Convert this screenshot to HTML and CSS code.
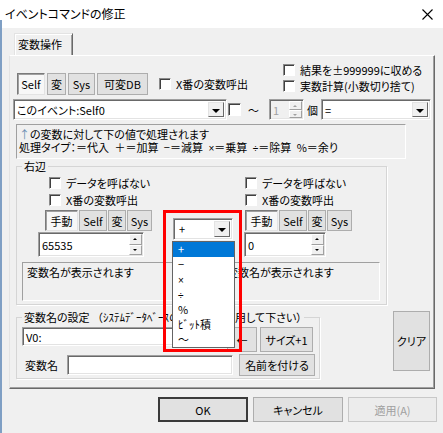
FILE: index.html
```html
<!DOCTYPE html>
<html lang="ja">

<head>
    <meta charset="UTF-8">
    <meta name="viewport" content="width=device-width, initial-scale=1.0">
    <title>イベントコマンドの修正</title>
    <link rel="stylesheet" href="styles.css">
</head>

<body>

    <div class="window">
        <div class="edge"></div>

        <div class="titlebar">
            <span class="title">イベントコマンドの修正</span>
            <svg class="close" width="11" height="11" viewBox="0 0 11 11">
                <path d="M0.5 0.5 L10.5 10.5 M10.5 0.5 L0.5 10.5" stroke="#000" stroke-width="1.1" fill="none"/>
            </svg>
        </div>

        <div class="client">
            <div class="tabs">
                <div class="tab">変数操作</div>
            </div>

            <div class="panel">
                <div class="row1">
                    <div class="target">
                        <div class="btn-group">
                            <button class="tb pressed w-self">Self</button>
                            <button class="tb w-hen">変</button>
                            <button class="tb w-sys">Sys</button>
                            <button class="tb w-db">可変DB</button>
                        </div>
                        <label class="check x-call"><span class="box"></span>X番の変数呼出</label>
                    </div>
                    <div class="options">
                        <label class="check"><span class="box"></span>結果を±999999に収める</label>
                        <label class="check"><span class="box"></span>実数計算(小数切り捨て)</label>
                    </div>
                </div>

                <div class="row2">
                    <div class="combo w-event"><span class="val">このイベント:Self0</span><span class="drop"></span></div>
                    <span class="box range-box"></span>
                    <span class="tilde">〜</span>
                    <div class="spin disabled w-count"><span class="val">1</span><span class="arrows"><i class="up"></i><i class="down"></i></span></div>
                    <span class="unit">個</span>
                    <div class="combo w-op"><span class="val">=</span><span class="drop"></span></div>
                </div>

                <div class="info">
                    <div><span class="arrow-up">↑</span>の変数に対して下の値で処理されます</div>
                    <div class="types">処理タイプ：＝代入 ＋＝加算 −＝減算 <span class="small">×</span>＝乗算 <span class="small">÷</span>＝除算 %＝余り</div>
                </div>

                <fieldset class="group right-side">
                    <legend>右辺</legend>
                    <div class="operands">
                        <div class="operand left">
                            <label class="check"><span class="box"></span>データを呼ばない</label>
                            <label class="check"><span class="box"></span>X番の変数呼出</label>
                            <div class="btn-group">
                                <button class="tb pressed w-manual">手動</button>
                                <button class="tb w-self2">Self</button>
                                <button class="tb w-hen2">変</button>
                                <button class="tb w-sys2">Sys</button>
                            </div>
                            <div class="spin w-value-l"><span class="val">65535</span><span class="arrows"><i class="up"></i><i class="down"></i></span></div>
                        </div>
                        <div class="op-col">
                            <div class="combo w-calc"><span class="val">+</span><span class="drop"></span></div>
                        </div>
                        <div class="operand right">
                            <label class="check"><span class="box"></span>データを呼ばない</label>
                            <label class="check"><span class="box"></span>X番の変数呼出</label>
                            <div class="btn-group">
                                <button class="tb pressed w-manual">手動</button>
                                <button class="tb w-self2">Self</button>
                                <button class="tb w-hen2">変</button>
                                <button class="tb w-sys2">Sys</button>
                            </div>
                            <div class="spin w-value-r"><span class="val">0</span><span class="arrows"><i class="up"></i><i class="down"></i></span></div>
                        </div>
                    </div>
                    <div class="names">
                        <div class="namebox name-l">変数名が表示されます</div>
                        <div class="namebox name-r">変数名が表示されます</div>
                    </div>
                </fieldset>

                <div class="bottom">
                    <fieldset class="group naming">
                        <legend>変数名の設定 <span class="note">（ｼｽﾃﾑﾃﾞｰﾀﾍﾞｰｽの変数名を使<span class="tail">用して下さい）</span></span></legend>
                        <div class="name-row">
                            <div class="edit w-v0">V0:</div>
                            <button class="btn w-copy">←</button>
                            <button class="btn w-size2">サイズ+1</button>
                        </div>
                        <div class="name-row2">
                            <span class="lbl">変数名</span>
                            <div class="edit w-name"></div>
                            <button class="btn w-naming">名前を付ける</button>
                        </div>
                    </fieldset>
                    <button class="btn clear">クリア</button>
                </div>
            </div>

            <div class="footer">
                <button class="btn default w-foot">OK</button>
                <button class="btn w-foot">キャンセル</button>
                <button class="btn disabled w-foot2">適用(A)</button>
            </div>
        </div>

        <!-- 開いているプルダウン -->
        <ul class="droplist">
            <li class="sel">+</li>
            <li>−</li>
            <li><span class="small">×</span></li>
            <li><span class="small">÷</span></li>
            <li>%</li>
            <li>ﾋﾞｯﾄ積</li>
            <li>〜</li>
        </ul>

        <div class="mark"></div>
    </div>

</body>

</html>
```

FILE: styles.css
```css
* {
    box-sizing: border-box;
}

body {
    margin: 0;
    padding: 0;
    font-family: "Noto Sans CJK JP", "Liberation Sans", sans-serif;
    font-size: 11px;
    font-feature-settings: "palt";
    color: #000;
    background: #fff;
}

button {
    font-family: inherit;
    font-size: 11px;
    font-feature-settings: "palt";
    color: #000;
    padding: 0;
    margin: 0;
}

.window {
    position: relative;
    width: 443px;
    height: 433px;
    overflow: hidden;
    background: #f0f0f0;
}

.edge {
    position: absolute;
    left: 0;
    top: 20px;
    width: 2px;
    bottom: 0;
    background: #7f9fc4;
}

.titlebar {
    height: 28px;
    background: #fff;
    display: flex;
    align-items: center;
    padding-left: 5px;
    padding-right: 10px;
}

.title {
    font-size: 12px;
    line-height: 14px;
}

.close {
    margin-left: auto;
}

.client {
    padding: 5px 0 0 9px;
}

.tabs {
    display: flex;
    padding-left: 5px;
}

.tab {
    width: 59px;
    height: 22px;
    line-height: 20px;
    padding-left: 3px;
    border-top: 1px solid #e3e3e3;
    border-left: 1px solid #e3e3e3;
    border-right: 1px solid #696969;
    box-shadow: inset 1px 1px #fff, inset -1px 0 #a0a0a0;
}

.panel {
    width: 426px;
    height: 334px;
    border: 1px solid;
    border-color: #fff #696969 #696969 #e3e3e3;
    box-shadow: inset -1px -1px #a0a0a0;
}

/* 上段 */
.row1 {
    display: flex;
    align-items: flex-end;
    margin: 6px 0 0 7px;
}

.target {
    display: flex;
    align-items: center;
    width: 266px;
}

.btn-group {
    display: flex;
    gap: 2px;
}

.tb {
    height: 22px;
    background: #e1e1e1;
    border: 1px solid #adadad;
}

.tb.pressed {
    background: #f7f7f7;
    border-color: #7a7a7a #e3e3e3 #e3e3e3 #7a7a7a;
    box-shadow: inset 1px 1px #a0a0a0;
}

.w-self { width: 28px; }
.w-hen { width: 19px; }
.w-sys { width: 27px; }
.w-db { width: 51px; }

.check {
    display: flex;
    align-items: center;
    gap: 5px;
    height: 15px;
    white-space: nowrap;
}

.x-call {
    margin-left: 11px;
}

.box {
    display: inline-block;
    flex: none;
    width: 12px;
    height: 12px;
    background: #fff;
    border: 1px solid;
    border-color: #8a8a8a #fff #fff #8a8a8a;
    box-shadow: inset 1px 1px #404040;
}

.options {
    display: flex;
    flex-direction: column;
    gap: 1px;
    margin-bottom: 2px;
}

/* 変数選択の行 */
.row2 {
    display: flex;
    align-items: center;
    margin: 4px 0 0 3px;
    height: 21px;
}

.combo,
.spin,
.edit {
    display: flex;
    align-items: center;
    background: #fff;
    border: 1px solid;
    border-color: #a0a0a0 #fff #fff #a0a0a0;
    box-shadow: inset 1px 1px #696969, inset -1px -1px #e3e3e3;
    padding: 2px;
}

.combo {
    height: 21px;
}

.combo .val,
.spin .val {
    flex: 1;
    padding-left: 1px;
    white-space: nowrap;
    overflow: hidden;
}

.drop {
    position: relative;
    flex: none;
    width: 16px;
    height: 100%;
    background: #f0f0f0;
    border: 1px solid;
    border-color: #e3e3e3 #696969 #696969 #e3e3e3;
}

.drop::after {
    content: "";
    position: absolute;
    left: 3px;
    top: 6px;
    border-left: 4px solid transparent;
    border-right: 4px solid transparent;
    border-top: 4px solid #000;
}

.w-event { width: 214px; }

.range-box {
    width: 13px;
    height: 13px;
    margin-left: 1px;
}

.tilde {
    margin-left: 7px;
    width: 12px;
}

.spin {
    height: 21px;
    padding: 1px 1px 1px 2px;
}

.arrows {
    flex: none;
    display: flex;
    flex-direction: column;
    width: 13px;
    height: 100%;
}

.arrows i {
    position: relative;
    flex: 1;
    background: #f0f0f0;
    border: 1px solid;
    border-color: #fff #a0a0a0 #a0a0a0 #fff;
}

.arrows i::after {
    content: "";
    position: absolute;
    left: 3px;
    border-left: 2px solid transparent;
    border-right: 2px solid transparent;
}

.arrows .up::after {
    top: 3px;
    border-bottom: 2px solid #000;
}

.arrows .down::after {
    top: 3px;
    border-top: 2px solid #000;
}

.spin.disabled {
    background: #f0f0f0;
    color: #a0a0a0;
}

.spin.disabled .arrows i::after {
    border-top-color: #a0a0a0;
    border-bottom-color: #a0a0a0;
}

.w-count {
    width: 35px;
    margin-left: 9px;
}

.unit {
    margin-left: 3px;
}

.w-op {
    width: 110px;
    margin-left: 3px;
}

.info {
    width: 390px;
    margin: 4px 0 0 6px;
    padding: 3px 2px;
    line-height: 13px;
    border: 1px solid;
    border-color: #a0a0a0 #fff #fff #a0a0a0;
    white-space: nowrap;
}

.types {
    word-spacing: 3px;
}

.small {
    font-family: "Liberation Sans", sans-serif;
    font-size: 10px;
}

.arrow-up {
    color: #6b8fb3;
}

/* グループ枠 */
.group {
    margin: 0;
    padding: 0;
    border: 1px solid #d5d5d5;
    box-shadow: 1px 1px #fff;
}

.group legend {
    padding: 0 2px;
    margin-left: 5px;
    line-height: 13px;
}

.right-side {
    width: 371px;
    margin: 1px 0 0 6px;
    padding-bottom: 3px;
}

.operands {
    display: flex;
    margin: 3px 0 0 21px;
}

.operand {
    display: flex;
    flex-direction: column;
}

.operand .check {
    height: 14px;
    margin-bottom: 3px;
}

.operand.left {
    width: 122px;
}

.operand.left .check {
    margin-left: 11px;
}

.operand.left .btn-group {
    margin-left: 7px;
}

.operand.right {
    margin-left: 11px;
}

.operand.right .check,
.operand.right .btn-group {
    margin-left: 1px;
}

.operand .btn-group {
    gap: 1px;
}

.operand .tb {
    height: 21px;
}

.w-manual { width: 33px; }
.w-self2 { width: 28px; }
.w-hen2 { width: 18px; }
.w-sys2 { width: 25px; }

.operand .spin {
    margin-top: 1px;
    height: 25px;
}

.w-value-l { width: 106px; }
.w-value-r { width: 82px; }

.op-col {
    margin-left: 13px;
    padding-top: 42px;
}

.w-calc {
    width: 60px;
    height: 22px;
}

.w-calc .val {
    padding-left: 3px;
}

.names {
    display: flex;
    gap: 2px;
    margin: 5px 0 0 5px;
}

.namebox {
    height: 39px;
    padding: 2px 4px;
    line-height: 14px;
    border: 1px solid;
    border-color: #a0a0a0 #fff #fff #a0a0a0;
    white-space: nowrap;
    overflow: hidden;
}

.name-l { width: 198px; }
.name-r { width: 158px; }

/* 下段 */
.bottom {
    display: flex;
    align-items: flex-start;
    margin: 6px 0 0 6px;
}

.naming {
    width: 304px;
    padding-bottom: 2px;
}

.note {
    font-feature-settings: normal;
}

.note .tail {
    font-feature-settings: "palt";
}

.name-row {
    display: flex;
    align-items: flex-start;
    margin: 3px 0 0 5px;
}

.edit {
    height: 20px;
}

.w-v0 {
    width: 202px;
    height: 19px;
    padding-left: 3px;
}

.btn {
    height: 25px;
    background: #e1e1e1;
    border: 1px solid #adadad;
    white-space: nowrap;
}

.w-copy {
    width: 30px;
    margin-left: 3px;
}

.w-size2 {
    width: 53px;
    margin-left: 3px;
}

.name-row2 {
    display: flex;
    align-items: center;
    height: 22px;
    margin: 2px 0 0 5px;
}

.lbl {
    margin-left: 3px;
    width: 42px;
}

.w-name {
    width: 166px;
}

.w-naming {
    width: 76px;
    height: 22px;
    margin-left: 6px;
}

.clear {
    width: 37px;
    height: 60px;
    margin-left: 73px;
}

.footer {
    display: flex;
    gap: 5px;
    margin-top: 8px;
    padding-left: 149px;
}

.w-foot { width: 90px; }
.w-foot2 { width: 89px; }

.btn.default {
    border: 2px solid #3a3a3a;
}

.btn.disabled {
    color: #a0a0a0;
    background: #ececec;
    border-color: #c8c8c8;
}

/* 開いたリスト */
.droplist {
    position: absolute;
    left: 172px;
    top: 241px;
    width: 63px;
    margin: 0;
    padding: 0;
    list-style: none;
    background: #fff;
    border: 1px solid #646464;
}

.droplist li {
    height: 15px;
    line-height: 15px;
    padding-left: 5px;
}

.droplist li.sel {
    background: #0078d7;
    color: #fff;
}

.mark {
    position: absolute;
    left: 163px;
    top: 210px;
    width: 79px;
    height: 142px;
    border: 3px solid #f00;
}
```
